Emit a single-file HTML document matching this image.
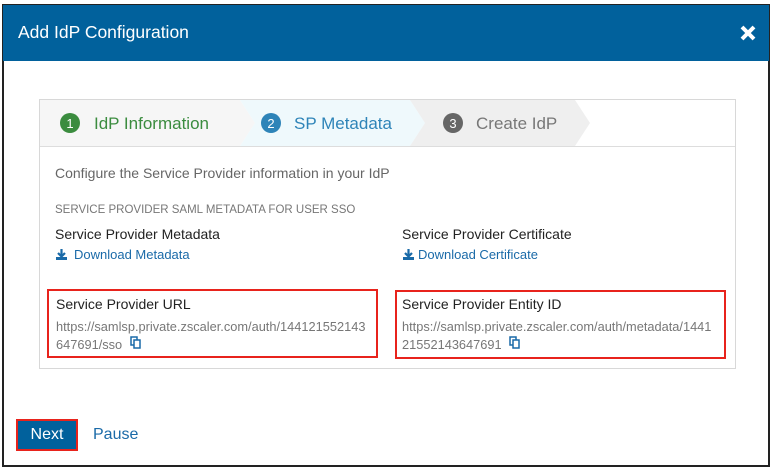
<!DOCTYPE html>
<html><head><style>
*{margin:0;padding:0;box-sizing:border-box}
body{width:773px;height:472px;background:#fff;font-family:"Liberation Sans",sans-serif;position:relative;overflow:hidden}
.abs{position:absolute;white-space:nowrap}
</style></head><body>
<div class="abs" style="left:2px;top:4px;width:768px;height:463px;border:2px solid #222;border-top-width:1px"></div>
<div class="abs" style="left:3px;top:5px;width:766px;height:56px;background:#01619c"></div>
<div class="abs" style="left:18px;top:22px;color:#fff;font-size:17.5px">Add IdP Configuration</div>
<svg class="abs" style="left:739px;top:24px" width="18" height="18"><path d="M3 3L15 15M15 3L3 15" stroke="#fff" stroke-width="4"/></svg>
<div class="abs" style="left:39px;top:99px;width:697px;height:270px;border:1px solid #d8d8d8"></div>
<svg class="abs" style="left:40px;top:100px" width="600" height="46">
<polygon points="0,0 200,0 215,23 200,46 0,46" fill="#f6f6f6"/>
<polygon points="200,0 370,0 385,23 370,46 200,46 215,23" fill="#eff9fc"/>
<polygon points="370,0 535,0 550,23 535,46 370,46 385,23" fill="#efefef"/>
<circle cx="30" cy="23" r="10" fill="#3b8c3f"/><text x="30" y="28" font-size="13" fill="#fff" text-anchor="middle" font-family="Liberation Sans">1</text>
<circle cx="231" cy="23" r="10" fill="#2e84b8"/><text x="231" y="28" font-size="13" fill="#fff" text-anchor="middle" font-family="Liberation Sans">2</text>
<circle cx="413" cy="23" r="10" fill="#666"/><text x="413" y="28" font-size="13" fill="#fff" text-anchor="middle" font-family="Liberation Sans">3</text>
<text x="54" y="29" font-size="17" fill="#3b8c3f" font-family="Liberation Sans">IdP Information</text>
<text x="254" y="29" font-size="17" fill="#2e84b8" font-family="Liberation Sans">SP Metadata</text>
<text x="436" y="29" font-size="17" fill="#777" font-family="Liberation Sans">Create IdP</text>
</svg>
<div class="abs" style="left:40px;top:146px;width:695px;height:1px;background:#ddd"></div>
<div class="abs" style="left:55px;top:165px;font-size:14px;color:#666">Configure the Service Provider information in your IdP</div>
<div class="abs" style="left:55px;top:204px;font-size:11.5px;color:#777">SERVICE PROVIDER SAML METADATA FOR USER SSO</div>
<div class="abs" style="left:55px;top:226px;font-size:14px;color:#222">Service Provider Metadata</div>
<div class="abs" style="left:402px;top:226px;font-size:14px;color:#222">Service Provider Certificate</div>
<svg class="abs" style="left:55px;top:248px" width="13" height="13"><path d="M6.5 1V8M3 5L6.5 8.5 10 5" stroke="#1a6aa8" stroke-width="2.2" fill="none"/><rect x="1" y="9" width="11" height="3" fill="#1a6aa8"/></svg>
<div class="abs" style="left:74px;top:247px;font-size:13px;color:#1a6aa8">Download Metadata</div>
<svg class="abs" style="left:402px;top:248px" width="13" height="13"><path d="M6.5 1V8M3 5L6.5 8.5 10 5" stroke="#1a6aa8" stroke-width="2.2" fill="none"/><rect x="1" y="9" width="11" height="3" fill="#1a6aa8"/></svg>
<div class="abs" style="left:418px;top:247px;font-size:13px;color:#1a6aa8">Download Certificate</div>
<div class="abs" style="left:47px;top:289px;width:331px;height:69px;border:2px solid #e8231c"></div>
<div class="abs" style="left:395px;top:290px;width:331px;height:69px;border:2px solid #e8231c"></div>
<div class="abs" style="left:56px;top:296px;font-size:14px;color:#222">Service Provider URL</div>
<div class="abs" style="left:56px;top:318px;font-size:12.8px;color:#777;line-height:18px">https://samlsp.private.zscaler.com/auth/144121552143<br>647691/sso</div>
<div class="abs" style="left:402px;top:296px;font-size:14px;color:#222">Service Provider Entity ID</div>
<div class="abs" style="left:402px;top:318px;font-size:12.8px;color:#777;line-height:18px">https://samlsp.private.zscaler.com/auth/metadata/1441<br>21552143647691</div>
<svg class="abs" style="left:130px;top:336px" width="12" height="13"><rect x="1" y="1" width="6" height="8" fill="none" stroke="#1a6aa8" stroke-width="1.5"/><rect x="4" y="4" width="6" height="8" fill="#fff" stroke="#1a6aa8" stroke-width="1.5"/></svg>
<svg class="abs" style="left:509px;top:336px" width="12" height="13"><rect x="1" y="1" width="6" height="8" fill="none" stroke="#1a6aa8" stroke-width="1.5"/><rect x="4" y="4" width="6" height="8" fill="#fff" stroke="#1a6aa8" stroke-width="1.5"/></svg>
<div class="abs" style="left:16px;top:419px;width:62px;height:32px;background:#01619c;border:2px solid #e8231c;color:#fff;font-size:16px;text-align:center;line-height:28px">Next</div>
<div class="abs" style="left:93px;top:426px;font-size:16px;color:#1a6aa8">Pause</div>
</body></html>
